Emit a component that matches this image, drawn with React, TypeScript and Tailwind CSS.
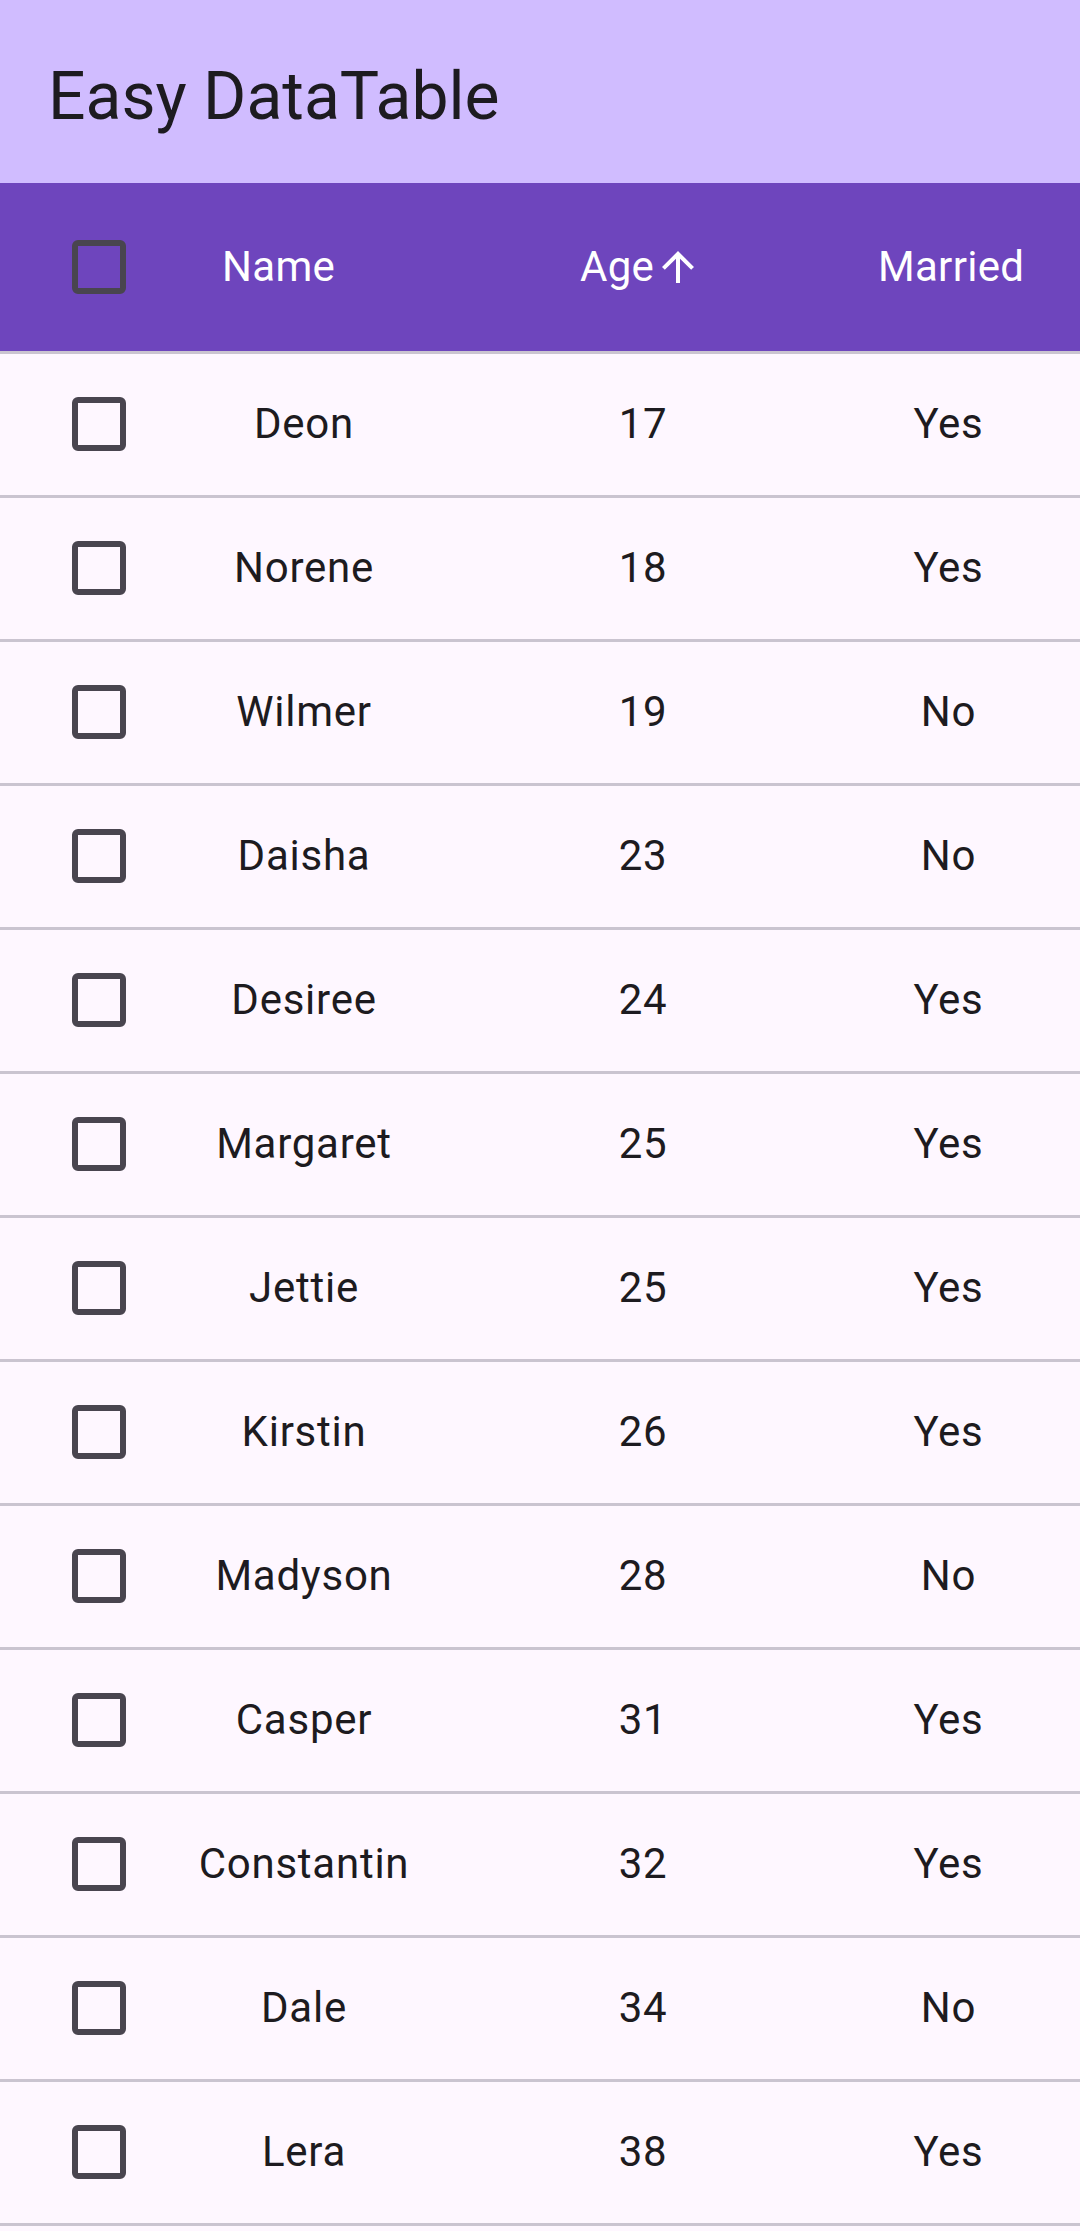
import React from "react";

const rows: [string, number, string][] = [
  ["Deon", 17, "Yes"],
  ["Norene", 18, "Yes"],
  ["Wilmer", 19, "No"],
  ["Daisha", 23, "No"],
  ["Desiree", 24, "Yes"],
  ["Margaret", 25, "Yes"],
  ["Jettie", 25, "Yes"],
  ["Kirstin", 26, "Yes"],
  ["Madyson", 28, "No"],
  ["Casper", 31, "Yes"],
  ["Constantin", 32, "Yes"],
  ["Dale", 34, "No"],
  ["Lera", 38, "Yes"],
];

function Checkbox() {
  return <div className="w-[54px] h-[54px] border-[6px] border-[#49454F] rounded-[6px] box-border" />;
}

function ArrowUp() {
  return (
    <svg width="48" height="48" viewBox="0 0 24 24" fill="#FFFFFF" className="shrink-0">
      <path d="M4 12l1.41 1.41L11 7.83V20h2V7.83l5.58 5.59L20 12l-8-8-8 8z" />
    </svg>
  );
}

export default function App() {
  return (
    <div className="w-full min-h-screen bg-[#FEF7FF] font-['Roboto',sans-serif]">
      <div className="h-[183px] bg-[#D0BCFF] flex items-center pl-[48px] pt-[10px]">
        <span className="text-[66px] leading-none text-[#1D1B20]">Easy DataTable</span>
      </div>
      <div className="grid grid-cols-[162px_284px_394px_217px] h-[171px] bg-[#6E45BD] border-b-[3px] border-[#CAC4D0] text-white text-[42px] leading-none tracking-[0.3px]">
        <div className="flex items-center pl-[72px]">
          <Checkbox />
        </div>
        <div className="flex items-center pl-[60px]">Name</div>
        <div className="flex items-center pl-[134px]">
          <span>Age</span>
          <ArrowUp />
        </div>
        <div className="flex items-center pl-[38px]">Married</div>
      </div>
      {rows.map(([name, age, married], i) => (
        <div
          key={i}
          className="grid grid-cols-[162px_284px_394px_217px] h-[144px] border-b-[3px] border-[#CAC4D0] pb-[2px] text-[#1D1B20] text-[42px] leading-none tracking-[0.75px]"
        >
          <div className="flex items-center pl-[72px]">
            <Checkbox />
          </div>
          <div className="flex items-center justify-center">{name}</div>
          <div className="flex items-center justify-center">{age}</div>
          <div className="flex items-center justify-center">{married}</div>
        </div>
      ))}
    </div>
  );
}
